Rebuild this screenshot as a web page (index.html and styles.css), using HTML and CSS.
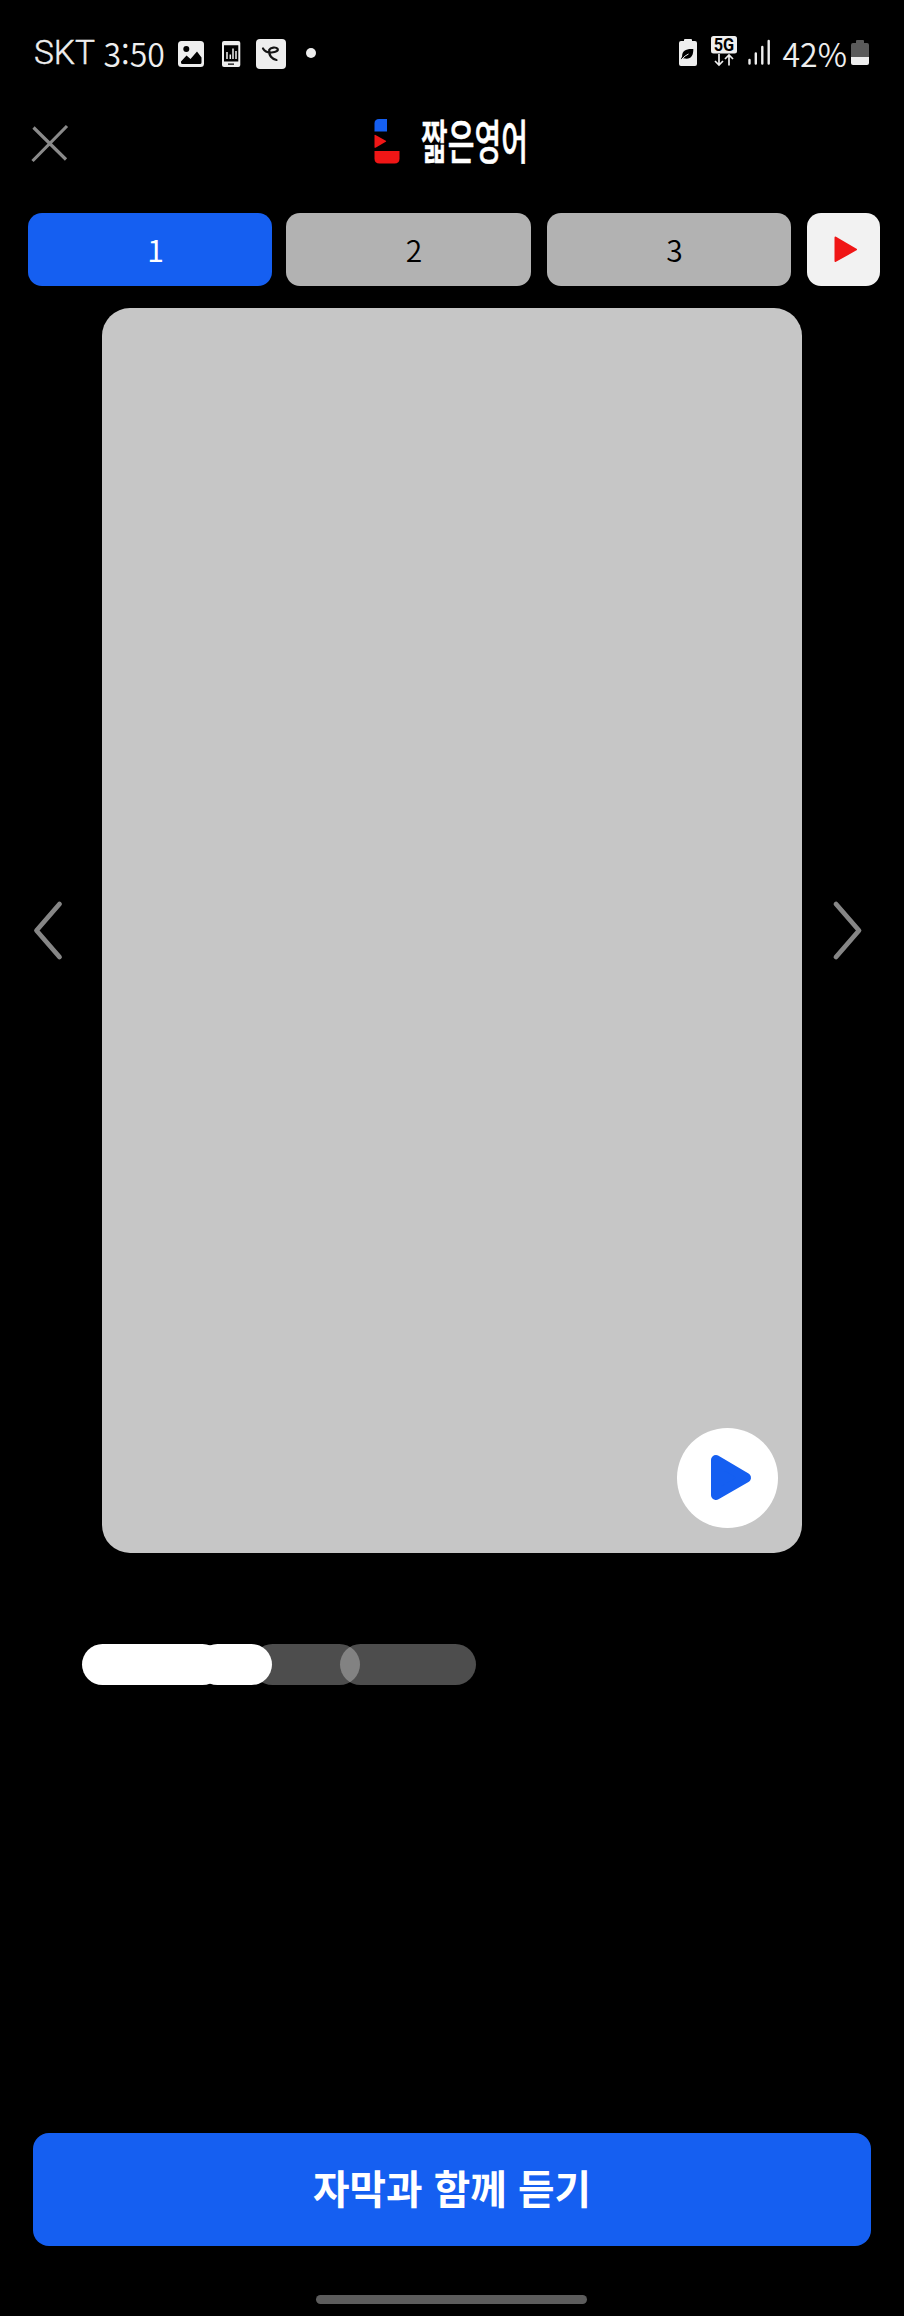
FILE: index.html
```html
<!DOCTYPE html>
<html lang="ko">
<head>
<meta charset="utf-8">
<title>짧은영어</title>
<link rel="stylesheet" href="styles.css">
</head>
<body>
<div class="screen">
  <div class="status">
    <span class="carrier">SKT</span>
    <span class="clock">3:50</span>
    <svg class="notices" width="140" height="34" viewBox="177 36 140 34">
      <rect x="178" y="41" width="26" height="26" rx="3.5" fill="#eee"/>
      <circle cx="186.300" cy="49" r="3" fill="#000"/>
      <path d="M181 61.500l5.500-6 4 3.500 6.500-7.500 4.500 6v5q0 1.500-1.500 1.500h-17.500q-1.500 0-1.500-1.500z" fill="#000"/>
      <rect x="222" y="41" width="18.300" height="26" rx="2" fill="#eee"/>
      <path d="M224 45.300h14.300v16.200H224zM228 63.500h6v1.300h-6z" fill="#000"/>
      <path d="M227 59v-7M230.300 59v-4.500M233 59v-10.500M236 59v-8" stroke="#eee" stroke-width="1.500"/>
      <rect x="256" y="39" width="30" height="30" rx="4" fill="#eee"/>
      <path d="M263 48.500c2 3.500 5 4.300 8.500 4 5-.2 7-2 6-3.800-1.500-2-7-1.400-8.200 1-1 6 3 9.500 7.200 10.300" fill="none" stroke="#151515" stroke-width="2.200" stroke-linecap="round"/>
      <circle cx="311" cy="53" r="5" fill="#eee"/>
    </svg>
    <svg class="signals" width="96" height="34" viewBox="677 36 96 34">
      <path d="M684 41v-1q0-1 1-1h6q1 0 1 1v1h3q2 0 2 2v21q0 2-2 2h-14q-2 0-2-2V43q0-2 2-2z" fill="#eee"/>
      <path d="M693.300 49c-7-.5-11.300 1.500-11.200 7.500l-1.300 2.700 2.700-1c7 1.800 10-2.200 9.800-9.200z" fill="#000"/>
      <path d="M682 59q3-3.500 6.500-5" fill="none" stroke="#eee" stroke-width="1"/>
      <rect x="711" y="36" width="26" height="17.500" rx="2.500" fill="#eee"/>
      <text class="network" x="713.700" y="50.700" textLength="20.500" lengthAdjust="spacingAndGlyphs">5G</text>
      <path d="M719 54v11M715 61l4 4 4-4M729 65.500V55M725 59l4-4 4 4" fill="none" stroke="#eee" stroke-width="1.700"/>
      <path d="M749.500 60v3.500M755.800 53.500v10M762.300 47v16.500M768.700 41v22.500" fill="none" stroke="#eee" stroke-width="2.400" stroke-linecap="round"/>
    </svg>
    <span class="percent">42%</span>
    <svg class="battery" width="18" height="25" viewBox="0 0 18 25">
      <path d="M5 3V1q0-1 1-1h6q1 0 1 1v2h3q2 0 2 2v12H0V5q0-2 2-2z" fill="#5a5a5a"/>
      <path d="M0 17h18v6q0 2-2 2H2q-2 0-2-2z" fill="#eee"/>
    </svg>
  </div>

  <header class="header">
    <svg class="close" width="38" height="38" viewBox="31 125 38 38"><path d="M33.500 127.500l32.500 32M67 126L32.500 161" stroke="#8a8a8a" stroke-width="3.200"/></svg>
    <svg class="logo" width="156" height="48" viewBox="373 117 156 48">
      <path d="M379 119h8v12.500h-12.500v-8q0-4.500 4.500-4.500z" fill="#155ff1"/>
      <path d="M374.500 135.500q0-1 1-.5l10.300 5.700q.8.500 0 1l-10.300 6q-1 .5-1-.5z" fill="#f01616"/>
      <path d="M374.500 151h25v7.500q0 5-5 5h-15q-5 0-5-5z" fill="#f01616"/>
      <text class="wordmark" x="421" y="159" textLength="107" lengthAdjust="spacingAndGlyphs">짧은영어</text>
    </svg>
  </header>

  <nav class="tabs">
    <button class="tab active">1</button>
    <button class="tab">2</button>
    <button class="tab">3</button>
    <button class="video"><svg width="24" height="27" viewBox="0 0 24 27"><path d="M1.500 1.500L22 13.500 1.500 25z" fill="#f01616" stroke="#f01616" stroke-width="2" stroke-linejoin="round"/></svg></button>
  </nav>

  <main class="stage">
    <svg class="arrow" width="30" height="60" viewBox="33 900 30 60"><path d="M59.500 904L36.500 930.500 59.500 957" fill="none" stroke="#868686" stroke-width="4.800" stroke-linecap="round" stroke-linejoin="round"/></svg>
    <div class="card">
      <button class="play"><svg width="40" height="45" viewBox="711 1455 40 45"><path d="M716 1460l30 17.700-30 17.300z" fill="#155ff1" stroke="#155ff1" stroke-width="10" stroke-linejoin="round"/></svg></button>
    </div>
    <svg class="arrow" width="30" height="60" viewBox="832 900 30 60"><path d="M836 904l23 26.500L836 957" fill="none" stroke="#868686" stroke-width="4.800" stroke-linecap="round" stroke-linejoin="round"/></svg>
  </main>

  <div class="progress">
    <span class="pill filled first"></span>
    <span class="pill filled second"></span>
    <span class="pill third"></span>
    <span class="pill last"></span>
  </div>

  <footer class="footer">
    <button class="listen">자막과 함께 듣기</button>
    <div class="handle"></div>
  </footer>
</div>
</body>
</html>
```
FILE: styles.css
```css
* { box-sizing: border-box; }
body { margin: 0; background: #000; }
button { border: 0; padding: 0; font-family: inherit; }
svg { display: block; flex: none; overflow: visible; }
.screen {
  width: 904px;
  height: 2316px;
  display: flex;
  flex-direction: column;
  background: #000;
  font-family: "Noto Sans CJK KR", sans-serif;
}
.status {
  height: 105px;
  padding: 36px 35px 0 34px;
  display: flex;
  align-items: flex-start;
  color: #eee;
  font-size: 32px;
  font-weight: 350;
  line-height: 32px;
}
.carrier { width: 69.5px; padding-top: 1px; font-family: Roboto, sans-serif; font-size: 33.500px; font-weight: 300; -webkit-text-stroke: 0.4px #eee; }
.clock { width: 73.5px; padding-top: 1px; }
.signals { margin-left: auto; }
.percent { width: 78px; padding: 1px 0 0 9.5px; white-space: nowrap; }
.battery { margin-top: 4px; }
.network { font: 700 18px Roboto, sans-serif; fill: #000; }

.header {
  height: 108px;
  padding: 12px 31px 0;
  display: flex;
}
.close { margin-top: 8px; }
.logo { margin-left: 304px; }
.wordmark { font: 500 46.500px "Noto Sans CJK KR", sans-serif; fill: #fff; stroke: #fff; stroke-width: 0.6px; }

.tabs {
  padding-left: 27.5px;
  height: 72.5px;
  display: flex;
}
.tab {
  width: 244.5px;
  margin-right: 14px;
  border-radius: 14px;
  background: #b2b2b2;
  color: #000;
  font-size: 30px;
  font-weight: 350;
  line-height: 70px;
  padding-left: 11.500px;
}
.tab + .tab { margin-right: 16px; }
.active { background: #155ff1; color: #fff; font-weight: 400; }
.video {
  width: 73px;
  border-radius: 14px;
  background: #f2f2f2;
  display: flex;
  align-items: center;
  justify-content: center;
  padding-left: 5px;
}

.stage {
  margin-top: 22px;
  padding: 0 42px 0 33px;
  height: 1245.5px;
  display: flex;
  align-items: center;
  justify-content: space-between;
}
.card {
  width: 700.5px;
  height: 100%;
  margin-left: 9px;
  padding: 0 24px 25.5px 0;
  border-radius: 28px;
  background: #c6c6c6;
  display: flex;
  align-items: flex-end;
  justify-content: flex-end;
}
.play {
  width: 101.500px;
  height: 100px;
  border-radius: 50%;
  background: #fff;
  display: flex;
  align-items: center;
  justify-content: center;
  padding-left: 6px;
}

.progress {
  display: flex;
  margin-top: 91px;
  padding-left: 82px;
  height: 40.5px;
}
.pill { border-radius: 21px; background: rgba(255, 255, 255, 0.3); }
.pill + .pill { margin-left: -20px; }
.filled { background: #fff; z-index: 1; }
.first { width: 141px; }
.pill.second { width: 75px; margin-left: -26px; }
.third { width: 108px; }
.last { width: 136px; }

.footer {
  margin-top: auto;
  height: 183.5px;
  padding: 0 33px;
  display: flex;
  flex-direction: column;
  align-items: center;
}
.listen {
  width: 838px;
  height: 113.5px;
  padding-bottom: 5px;
  border-radius: 16px;
  background: #155ff1;
  color: #fff;
  font-size: 39.700px;
  font-weight: 700;
}
.handle {
  width: 271px;
  height: 9px;
  margin: 49px 1px 0 0;
  border-radius: 5px;
  background: #5c5c5c;
}
```
